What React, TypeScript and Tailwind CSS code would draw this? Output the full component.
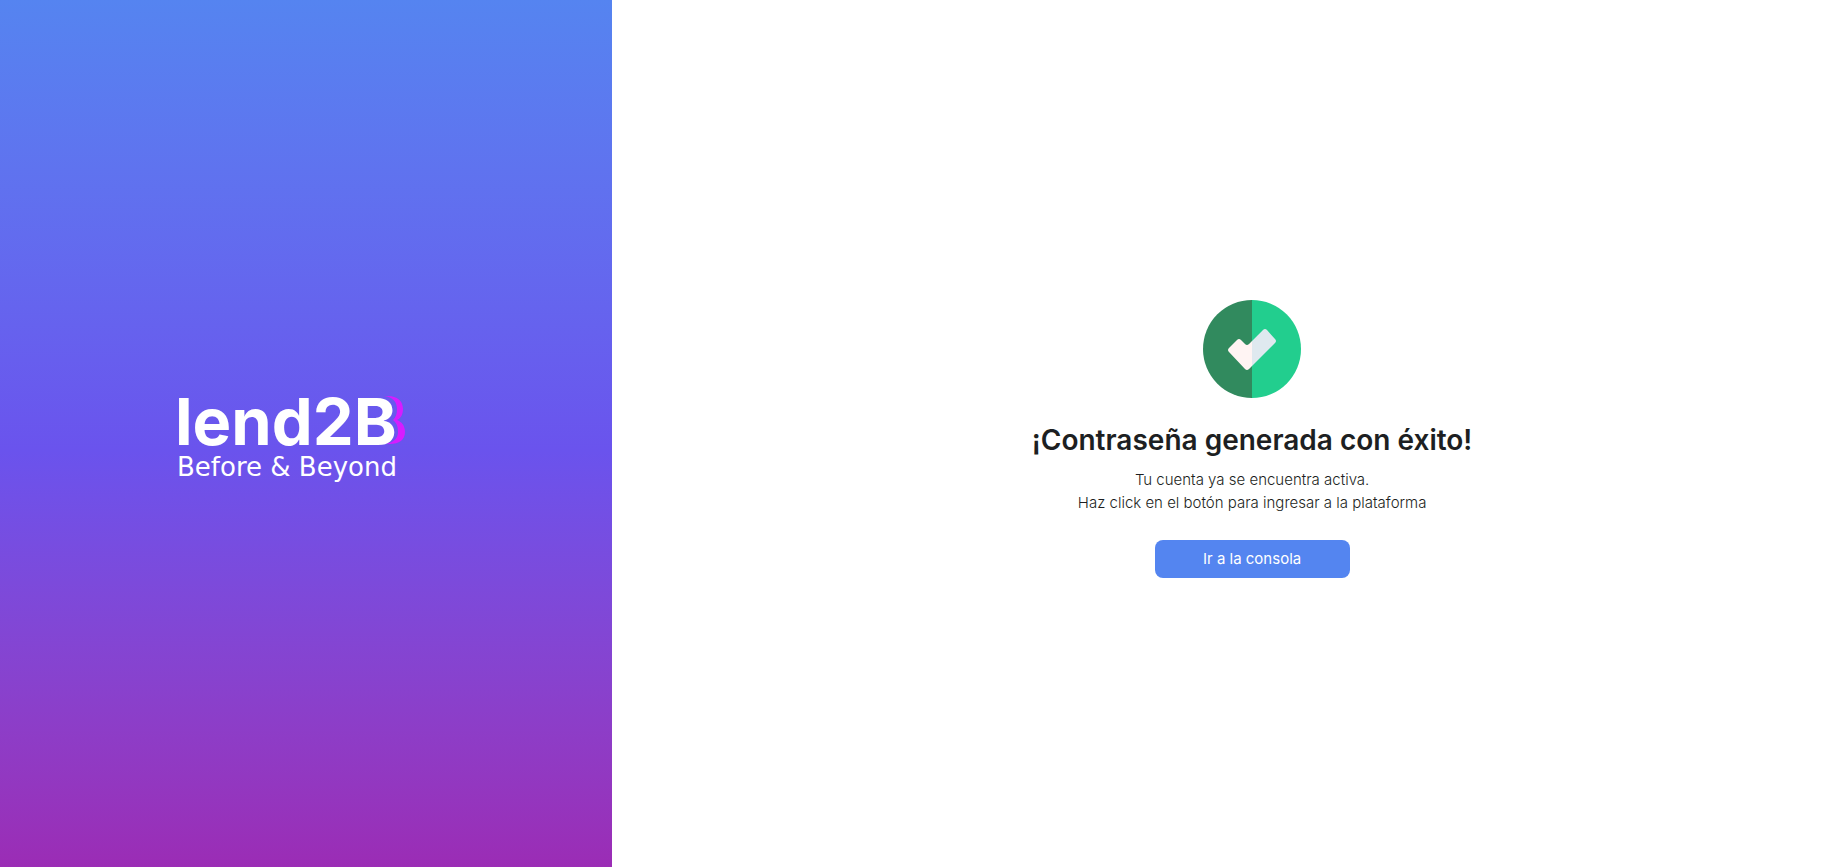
function Logo() {
  return (
    <svg viewBox="-5 -21 240 120" className="w-[240px] h-[120px]" role="img" aria-label="lend2B, Before &amp; Beyond">
      {/* Magenta edge behind the B */}
      <path
        d="M205 1h4c9 0 15 5 15 13c0 5-2 9-6 11c5 2 8 6 8 12c0 8-6 12-15 12h-4c8-2 12-6 12-12c0-5-1-9-5-12c3-3 4-6 4-11c0-7-4-12-13-13z"
        fill="#d61cff"
      />
      <text x="-4" y="50" fill="#ffffff" className="font-['Inter',sans-serif] text-[65px] font-bold">
        lend2B
      </text>
      <text x="-2" y="81" fill="#ffffff" className="font-['DejaVu_Sans',sans-serif] text-[26px]">
        Before &amp; Beyond
      </text>
    </svg>
  );
}

function SuccessIcon() {
  return (
    <svg viewBox="0 0 98 98" className="w-[98px] h-[98px]" aria-hidden="true">
      <path d="M49 0a49 49 0 0 0 0 98z" fill="#318a5e" />
      <path d="M49 0a49 49 0 0 1 0 98z" fill="#22ce8e" />
      <path d="M49 41l-3 3q-2 2-4 0l-4-4q-2-2-4 0l-8 8q-2 2 0 4l16 17q2 2 4 0l3-3z" fill="#fff4f3" />
      <path d="M49 41l11-11q2-2 4 0l8 9q2 2 0 4l-23 23z" fill="#dfe9ef" />
    </svg>
  );
}

export default function App() {
  return (
    <div className="flex min-h-screen bg-white font-['Inter',sans-serif]">
      <aside className="flex w-[33.2%] items-center justify-center bg-linear-to-b from-[#5584f0] via-[#6a53ed] via-52% to-[#9b2cb5] pr-6">
        <Logo />
      </aside>

      <main className="flex flex-1 flex-col items-center justify-center pl-12 pt-2.5 text-[#1d1f22]">
        <SuccessIcon />
        <h1 className="mt-[22px] text-[28px] leading-10 font-semibold">¡Contraseña generada con éxito!</h1>
        <p className="mt-2 text-center text-[15px] leading-[23px] font-light">
          Tu cuenta ya se encuentra activa.
          <br />
          Haz click en el botón para ingresar a la plataforma
        </p>
        <button type="button" className="mt-[26px] h-[38px] w-[195px] rounded-lg bg-[#5485f0] pt-0.5 text-[15px] text-white">
          Ir a la consola
        </button>
      </main>
    </div>
  );
}
